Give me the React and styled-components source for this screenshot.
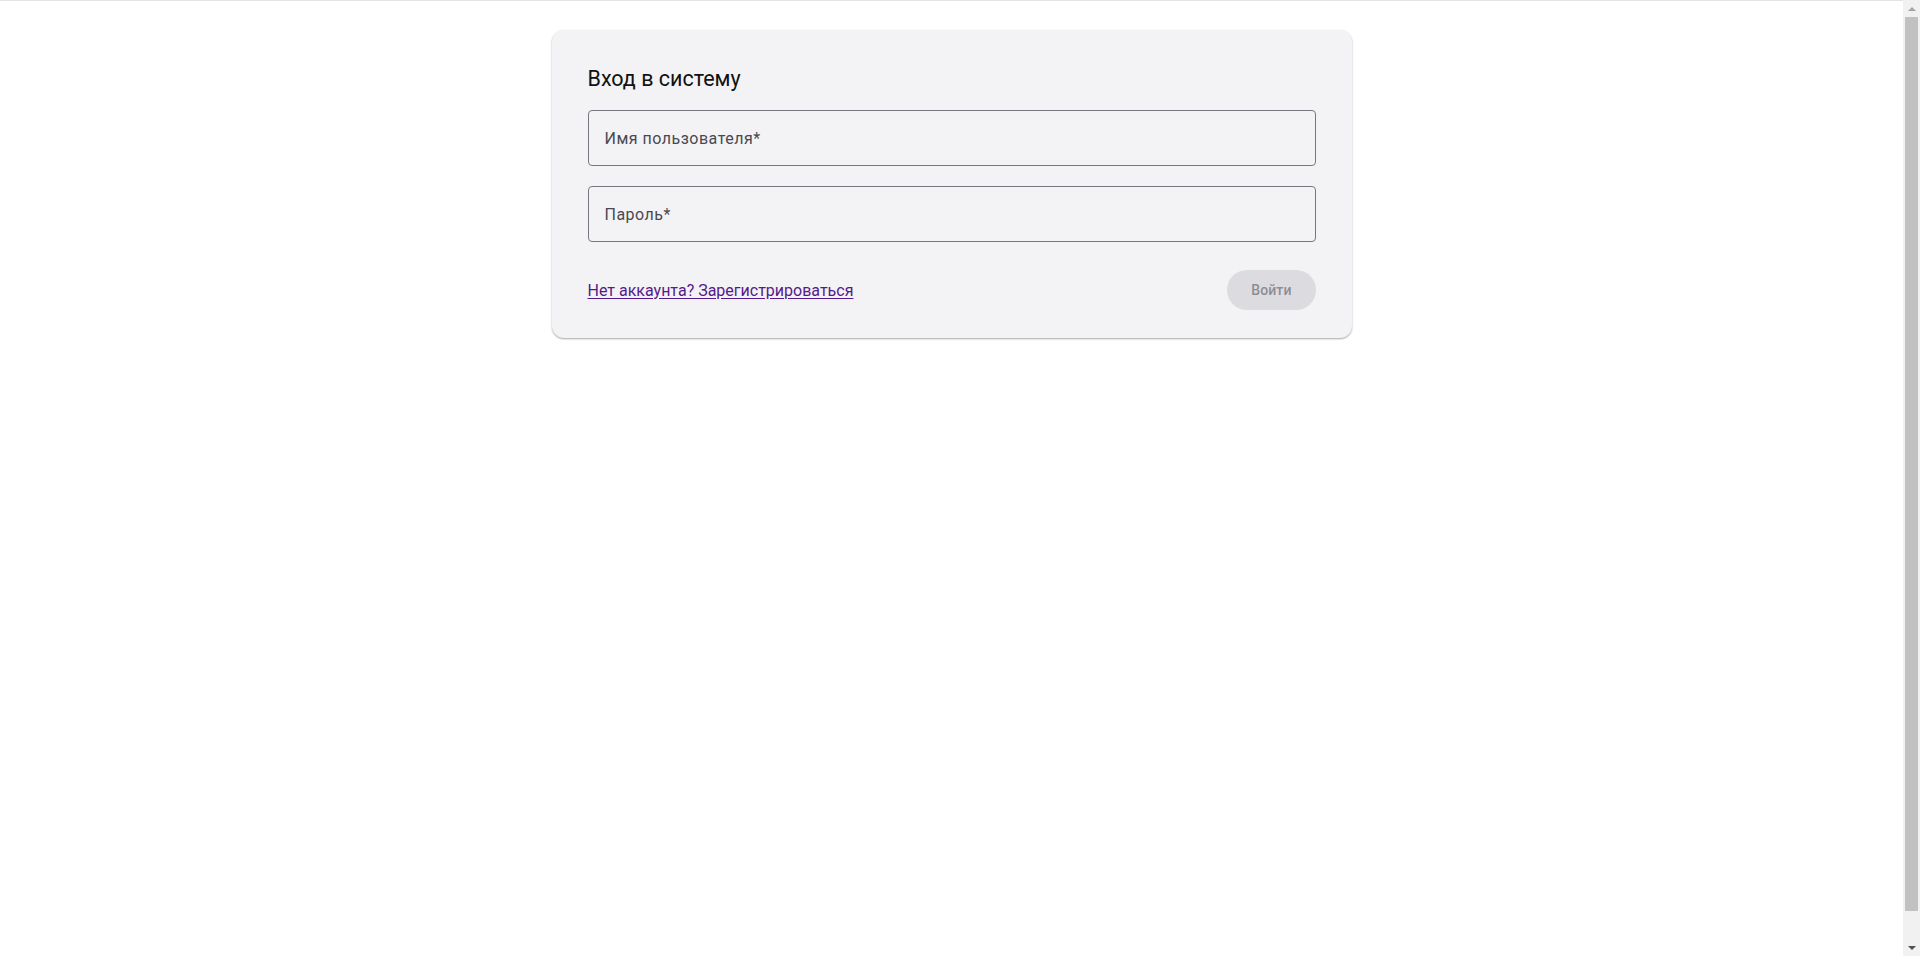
import React, { useState } from 'react';
import styled, { createGlobalStyle } from 'styled-components';

const GlobalStyle = createGlobalStyle`
  body {
    margin: 0;
    background: #ffffff;
    font-family: Roboto, "Noto Sans", Arial, sans-serif;
  }
`;

// room for the browser's classic scrollbar, which the page shows
const Page = styled.div`
  min-height: 100vh;
  border-top: 1px solid #e4e4e4;
  padding: 29px 17px 0 0;
  display: flex;
  justify-content: center;
  align-items: flex-start;
`;

const ScrollTrack = styled.div`
  position: fixed;
  top: 0;
  right: 0;
  bottom: 0;
  width: 17px;
  background: #f1f1f1;
  display: flex;
  flex-direction: column;
  align-items: center;
`;

const ScrollArrow = styled.div`
  height: 17px;
  display: flex;
  align-items: center;
  justify-content: center;

  &::before {
    content: '';
    border-left: 4px solid transparent;
    border-right: 4px solid transparent;
    ${({ down }) => (down ? 'border-top: 4px solid #505050;' : 'border-bottom: 4px solid #a3a3a3;')}
  }
`;

const ScrollThumb = styled.div`
  width: 13px;
  height: 894px;
  background: #c1c1c1;
  margin-bottom: auto;
`;

const Card = styled.form`
  width: 800px;
  box-sizing: border-box;
  padding: 33px 36px 28px;
  background: #f3f3f5;
  border-radius: 12px;
  box-shadow: 0 1px 2px rgba(0, 0, 0, 0.35);
`;

const Title = styled.h1`
  margin: 0 0 15px;
  font-size: 21.5px;
  font-weight: 400;
  line-height: 32px;
  color: #111111;
`;

const Field = styled.label`
  display: flex;
  align-items: center;
  height: 56px;
  box-sizing: border-box;
  margin-bottom: ${({ last }) => (last ? '28px' : '20px')};
  padding: 0 14px;
  border: 1px solid #76767f;
  border-radius: 4px;
  cursor: text;
`;

const Input = styled.input`
  flex: 1;
  border: none;
  outline: none;
  background: transparent;
  font-family: inherit;
  font-size: 16px;
  color: #1c1b1f;
  letter-spacing: 0.5px;

  &::placeholder {
    color: #4a4850;
    opacity: 1;
  }
`;

const Actions = styled.div`
  display: flex;
  justify-content: space-between;
  align-items: center;
`;

const Link = styled.a`
  font-size: 16px;
  color: #551a8b;
  text-decoration: underline;
  text-underline-offset: 2px;
`;

const SubmitButton = styled.button`
  height: 40px;
  padding: 0 24px;
  border: none;
  border-radius: 20px;
  background: #dcdce0;
  color: #8e8d93;
  font-family: inherit;
  font-size: 14px;
  font-weight: 500;
  letter-spacing: 0.1px;
  cursor: default;
`;

export default function App() {
  const [username, setUsername] = useState('');
  const [password, setPassword] = useState('');
  const ready = username && password;

  return (
    <>
      <GlobalStyle />
      <Page>
        <Card onSubmit={(e) => e.preventDefault()}>
          <Title>Вход в систему</Title>
          <Field>
            <Input
              placeholder="Имя пользователя*"
              value={username}
              onChange={(e) => setUsername(e.target.value)}
            />
          </Field>
          <Field last>
            <Input
              type="password"
              placeholder="Пароль*"
              value={password}
              onChange={(e) => setPassword(e.target.value)}
            />
          </Field>
          <Actions>
            <Link href="#register">Нет аккаунта? Зарегистрироваться</Link>
            <SubmitButton type="submit" disabled={!ready}>Войти</SubmitButton>
          </Actions>
        </Card>
      </Page>
      <ScrollTrack aria-hidden="true">
        <ScrollArrow />
        <ScrollThumb />
        <ScrollArrow down />
      </ScrollTrack>
    </>
  );
}
